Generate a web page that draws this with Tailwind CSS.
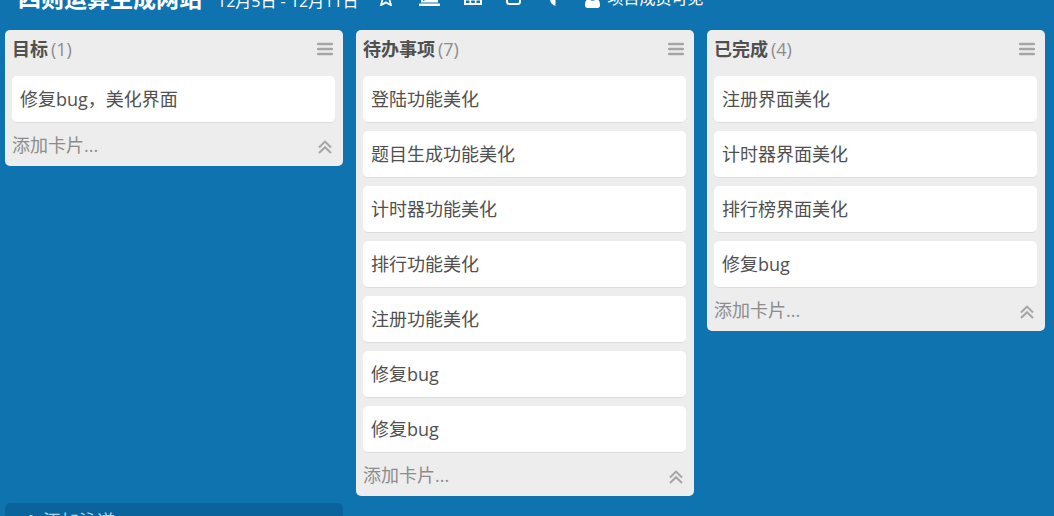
<!doctype html>
<html lang="zh-CN">
<head>
  <meta charset="UTF-8">
  <meta name="viewport" content="width=device-width, initial-scale=1.0">
  <title>四则运算生成网站</title>
  <script src="https://cdn.jsdelivr.net/npm/@tailwindcss/browser@4"></script>
</head>
<body class="h-screen overflow-hidden bg-[#0f73b0] font-['Open_Sans','Noto_Sans_CJK_SC',sans-serif] text-lg text-[#505050]">
  <!-- icons used more than once -->
  <svg class="hidden">
    <symbol id="menu" viewBox="0 0 16 14"><path d="M1 2h14M1 7h14M1 12h14" fill="none" stroke="currentColor" stroke-width="2.4" stroke-linecap="round"/></symbol>
    <symbol id="up" viewBox="0 0 14 14"><path d="M1 7.500 7 1.600l6 5.900M1 13 7 7.200l6 5.800" fill="none" stroke="currentColor" stroke-width="2"/></symbol>
  </svg>

  <!-- project bar, scrolled partly out of view -->
  <header class="h-[30px] overflow-hidden text-white">
    <div class="-mt-[22px] flex h-10 items-center pl-[18px] whitespace-nowrap">
      <div class="flex items-baseline gap-[15px]">
        <h1 class="text-[23px] leading-10 font-bold">四则运算生成网站</h1>
        <span class="text-base">12月5日 - 12月11日</span>
      </div>
      <div class="ml-[18px] flex items-center gap-6">
        <button aria-label="收藏"><svg class="h-4 w-[18px]" viewBox="0 0 18 16" fill="none" stroke="currentColor" stroke-width="1.8"><path d="m9 1.500 2.200 4.400 5 .7-3.600 3.300 1.400 5.300L9 12.400l-5 2.800 1.400-5.300L1.800 6.600l5-.7z"/></svg></button>
        <button aria-label="概览"><svg class="h-4 w-[21px]" viewBox="0 0 21 16" fill="currentColor"><path d="M2 1h17v1.500H4V11l6-1 5-3V2.500h4v10H2z"/><path d="M4 11l6-2 7-1v4H4zM0 13.500h21V16H0z"/></svg></button>
        <button aria-label="日历"><svg class="h-4 w-[18px]" viewBox="0 0 18 16" fill="currentColor"><path fill-rule="evenodd" d="M0 1h18v14H0zm2 5v3h3.500V6zm5.200 0v3h3.600V6zm5.300 0v3H16V6zM2 10.500v2.500h3.500v-2.500zm5.200 0v2.500h3.600v-2.500zm5.300 0v2.500H16v-2.500z"/></svg></button>
        <button aria-label="文件"><svg class="h-4 w-[15px]" viewBox="0 0 15 16" fill="none" stroke="currentColor" stroke-width="2"><rect x="1" y="1" width="13" height="13" rx="2.500"/></svg></button>
        <button aria-label="统计"><svg class="h-4 w-4" viewBox="0 0 16 16" fill="currentColor"><path d="M10.500 0v16A8 8 0 0 1 5 8a8 8 0 0 1 5.500-8z"/></svg></button>
        <button class="flex items-center gap-2 text-base"><svg class="mt-1 h-4 w-[15px]" viewBox="0 0 15 16" fill="currentColor"><circle cx="7.500" cy="4" r="4"/><path d="M3.500 7c2 2.200 6 2.200 8 0 2.500.5 3.500 2.500 3.500 6.500 0 1.500-1 2.500-2.500 2.500h-10C1 16 0 15 0 13.500 0 9.500 1 7.500 3.500 7z"/></svg>项目成员可见</button>
      </div>
    </div>
  </header>

  <main class="grid grid-cols-3 items-start gap-x-[13px] gap-y-[7px] pr-[9px] pl-[5px]">
    <section class="rounded-[5px] bg-[#ededed] pr-2 pl-[7px]">
      <div class="flex h-[46px] items-center justify-between pr-0.5 pb-2">
        <h2 class="font-bold">目标<span class="ml-[3px] font-normal text-[#8c8c8c]">(1)</span></h2>
        <button aria-label="菜单" class="text-[#a6a6a6]"><svg class="h-[14px] w-4"><use href="#menu"/></svg></button>
      </div>
      <ul class="grid gap-2">
        <li class="h-[47px] rounded-[5px] border-b border-[#dcdcdc] bg-white px-2 leading-[46px]">修复bug，美化界面</li>
      </ul>
      <div class="flex h-[43px] items-center justify-between pr-[3px] text-[#8c8c8c]">
        <button>添加卡片...</button>
        <button aria-label="收起" class="text-[#a6a6a6]"><svg class="mt-1 h-[14px] w-[14px]"><use href="#up"/></svg></button>
      </div>
    </section>

    <section class="rounded-[5px] bg-[#ededed] pr-2 pl-[7px]">
      <div class="flex h-[46px] items-center justify-between pr-0.5 pb-2">
        <h2 class="font-bold">待办事项<span class="ml-[3px] font-normal text-[#8c8c8c]">(7)</span></h2>
        <button aria-label="菜单" class="text-[#a6a6a6]"><svg class="h-[14px] w-4"><use href="#menu"/></svg></button>
      </div>
      <ul class="grid gap-2">
        <li class="h-[47px] rounded-[5px] border-b border-[#dcdcdc] bg-white px-2 leading-[46px]">登陆功能美化</li>
        <li class="h-[47px] rounded-[5px] border-b border-[#dcdcdc] bg-white px-2 leading-[46px]">题目生成功能美化</li>
        <li class="h-[47px] rounded-[5px] border-b border-[#dcdcdc] bg-white px-2 leading-[46px]">计时器功能美化</li>
        <li class="h-[47px] rounded-[5px] border-b border-[#dcdcdc] bg-white px-2 leading-[46px]">排行功能美化</li>
        <li class="h-[47px] rounded-[5px] border-b border-[#dcdcdc] bg-white px-2 leading-[46px]">注册功能美化</li>
        <li class="h-[47px] rounded-[5px] border-b border-[#dcdcdc] bg-white px-2 leading-[46px]">修复bug</li>
        <li class="h-[47px] rounded-[5px] border-b border-[#dcdcdc] bg-white px-2 leading-[46px]">修复bug</li>
      </ul>
      <div class="flex h-[43px] items-center justify-between pr-[3px] text-[#8c8c8c]">
        <button>添加卡片...</button>
        <button aria-label="收起" class="text-[#a6a6a6]"><svg class="mt-1 h-[14px] w-[14px]"><use href="#up"/></svg></button>
      </div>
    </section>

    <section class="rounded-[5px] bg-[#ededed] pr-2 pl-[7px]">
      <div class="flex h-[46px] items-center justify-between pr-0.5 pb-2">
        <h2 class="font-bold">已完成<span class="ml-[3px] font-normal text-[#8c8c8c]">(4)</span></h2>
        <button aria-label="菜单" class="text-[#a6a6a6]"><svg class="h-[14px] w-4"><use href="#menu"/></svg></button>
      </div>
      <ul class="grid gap-2">
        <li class="h-[47px] rounded-[5px] border-b border-[#dcdcdc] bg-white px-2 leading-[46px]">注册界面美化</li>
        <li class="h-[47px] rounded-[5px] border-b border-[#dcdcdc] bg-white px-2 leading-[46px]">计时器界面美化</li>
        <li class="h-[47px] rounded-[5px] border-b border-[#dcdcdc] bg-white px-2 leading-[46px]">排行榜界面美化</li>
        <li class="h-[47px] rounded-[5px] border-b border-[#dcdcdc] bg-white px-2 leading-[46px]">修复bug</li>
      </ul>
      <div class="flex h-[43px] items-center justify-between pr-[3px] text-[#8c8c8c]">
        <button>添加卡片...</button>
        <button aria-label="收起" class="text-[#a6a6a6]"><svg class="mt-1 h-[14px] w-[14px]"><use href="#up"/></svg></button>
      </div>
    </section>

    <button class="flex h-9 items-center gap-1.5 rounded-[5px] bg-[#0a649b] pl-5 text-[#b5d3e6]">
      <svg class="h-3 w-3" viewBox="0 0 12 12" fill="none" stroke="currentColor" stroke-width="3"><path d="M6 0v12M0 6h12"/></svg>添加泳道
    </button>
  </main>
</body>
</html>
